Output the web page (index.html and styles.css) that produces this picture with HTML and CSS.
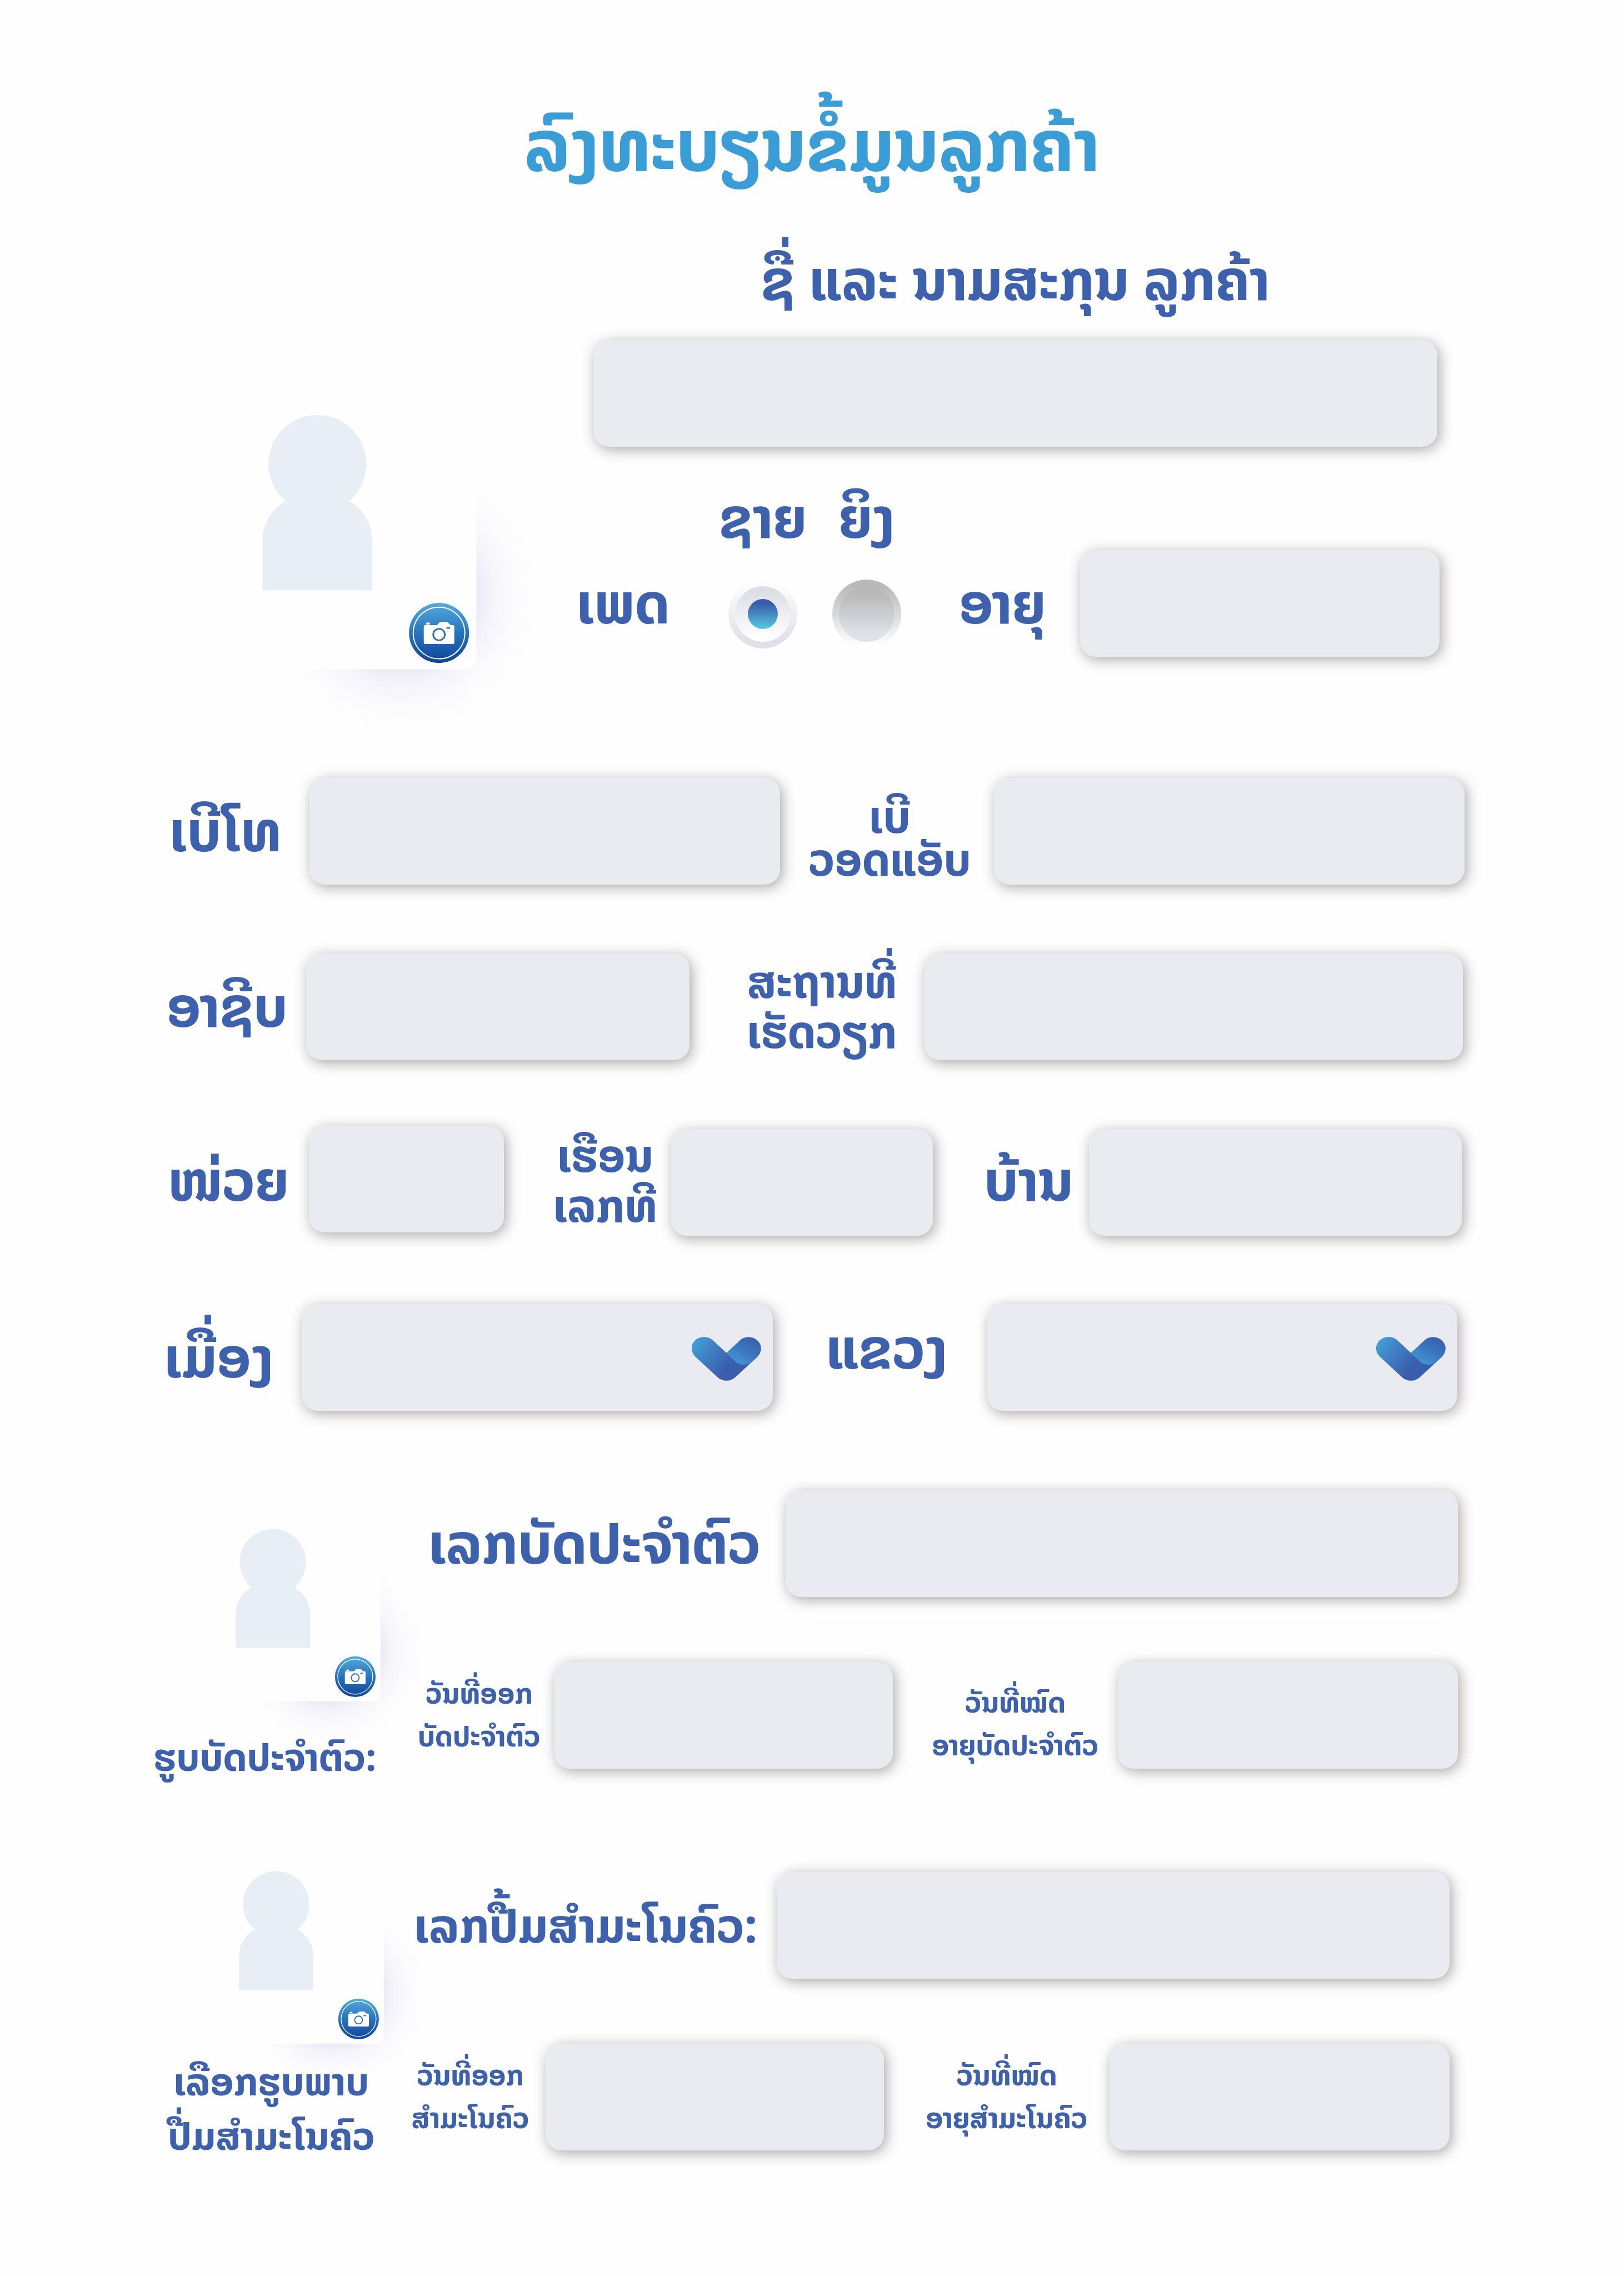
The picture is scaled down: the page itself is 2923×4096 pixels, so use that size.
FILE: index.html
```html
<!DOCTYPE html>
<html lang="lo">
<head>
<meta charset="utf-8">
<meta name="viewport" content="width=device-width, initial-scale=1">
<title>ລົງທະບຽນຂໍ້ມູນລູກຄ້າ</title>
<link rel="stylesheet" href="styles.css">
</head>
<body>
<svg class="defs" aria-hidden="true">
  <defs>
    <radialGradient id="glow">
      <stop offset="0" stop-color="#dedaf0"/>
      <stop offset=".54" stop-color="#ebe9f5"/>
      <stop offset=".66" stop-color="#f5f4fa"/>
      <stop offset=".82" stop-color="#fbfbfd"/>
      <stop offset="1" stop-color="#fefefe"/>
    </radialGradient>
    <linearGradient id="badge" x1="0" y1="0" x2="0" y2="1">
      <stop offset="0" stop-color="#53abdf"/>
      <stop offset=".5" stop-color="#2874bb"/>
      <stop offset="1" stop-color="#10439b"/>
    </linearGradient>
    <linearGradient id="arm-left" gradientUnits="userSpaceOnUse" x1="205" y1="205" x2="390" y2="350">
      <stop offset="0" stop-color="#439bd5"/>
      <stop offset=".55" stop-color="#3e78bf"/>
      <stop offset="1" stop-color="#3a5eab"/>
    </linearGradient>
    <linearGradient id="arm-right" gradientUnits="userSpaceOnUse" x1="460" y1="325" x2="540" y2="190">
      <stop offset="0" stop-color="#4493d0"/>
      <stop offset=".5" stop-color="#3c78bf"/>
      <stop offset="1" stop-color="#3b62ae"/>
    </linearGradient>
    <symbol id="photo-card" viewBox="490 780 540 520" overflow="visible">
      <circle cx="762" cy="1129" r="260" fill="url(#glow)"/>
      <path d="M490 780H904V1251a19 19 0 0 1-19 19H490Z" fill="#fefefe"/>
      <circle cx="602" cy="880" r="93" fill="#e7eef6"/>
      <path d="M498 1120V1024a83 83 0 0 1 83-83h42a83 83 0 0 1 83 83v96Z" fill="#e7eef6"/>
      <circle cx="833" cy="1201" r="57" fill="url(#badge)"/>
      <circle cx="833" cy="1201" r="49" fill="none" stroke="#fff" stroke-width="2"/>
      <path d="M808 1185v-1a3 3 0 0 1 3-3h2a3 3 0 0 1 3 3v1Z" fill="#fff"/>
      <path d="M807 1186h22l5-5q1-1 3-1h10q2 0 3 1l5 5h4q3 0 3 3v30q0 3-3 3h-52q-3 0-3-3v-30q0-3 3-3Z" fill="#fff"/>
      <circle cx="833" cy="1204" r="11" fill="none" stroke="#2b72ba" stroke-width="3"/>
      <rect x="847" y="1190" width="7" height="3" fill="#2874bb"/>
    </symbol>
    <symbol id="chevron" viewBox="189 171 396 248">
      <path fill="url(#arm-left)" d="M210 283C182 255 182 218 205 193C235 163 283 163 312 191L387 261L564 283L437 400C408 426 366 426 337 400Z"/>
      <path fill="url(#arm-right)" d="M387 261L462 191C491 163 540 165 566 193C592 218 590 257 564 283L522 321C497 331 460 330 437 309Z"/>
    </symbol>
  </defs>
</svg>

<form class="page">
  <h1 class="title">ລົງທະບຽນຂໍ້ມູນລູກຄ້າ</h1>

  <section class="profile">
    <label class="photo photo--large">
      <svg class="photo__art" role="img" aria-label="ຮູບພາບ"><use href="#photo-card"/></svg>
      <input class="photo__file" type="file" accept="image/*">
    </label>
    <div class="profile__fields">
      <div class="name">
        <label class="label" for="name">ຊື່ ແລະ ນາມສະກຸນ ລູກຄ້າ</label>
        <input class="field" id="name" type="text">
      </div>
      <div class="person">
        <span class="label label--tall" id="gender">ເພດ</span>
        <div class="options" role="radiogroup" aria-labelledby="gender">
          <label class="option"><span class="label">ຊາຍ</span><input class="radio" type="radio" name="gender" checked></label>
          <label class="option"><span class="label">ຍິງ</span><input class="radio" type="radio" name="gender"></label>
        </div>
        <label class="label label--tall" for="age">ອາຍຸ</label>
        <input class="field" id="age" type="text">
      </div>
    </div>
  </section>

  <div class="row row--phone">
    <label class="label" for="phone">ເບີໂທ</label>
    <input class="field" id="phone" type="text">
    <label class="label label--medium label--tight" for="whatsapp">ເບີ<br>ວອດແອັບ</label>
    <input class="field" id="whatsapp" type="text">
  </div>

  <div class="row row--job">
    <label class="label" for="job">ອາຊີບ</label>
    <input class="field" id="job" type="text">
    <label class="label label--medium label--second" for="workplace">ສະຖານທີ່<br>ເຮັດວຽກ</label>
    <input class="field" id="workplace" type="text">
  </div>

  <div class="row row--home">
    <label class="label" for="unit">ໜ່ວຍ</label>
    <input class="field" id="unit" type="text">
    <label class="label label--medium label--second" for="house">ເຮືອນ<br>ເລກທີ</label>
    <input class="field" id="house" type="text">
    <label class="label label--second" for="village">ບ້ານ</label>
    <input class="field" id="village" type="text">
  </div>

  <div class="row row--area">
    <label class="label" for="district">ເມື່ອງ</label>
    <div class="dropdown">
      <select class="field" id="district"><option></option></select>
      <svg class="dropdown__arrow" aria-hidden="true"><use href="#chevron"/></svg>
    </div>
    <label class="label label--second" for="province">ແຂວງ</label>
    <div class="dropdown">
      <select class="field" id="province"><option></option></select>
      <svg class="dropdown__arrow" aria-hidden="true"><use href="#chevron"/></svg>
    </div>
  </div>

  <section class="document document--card">
    <label class="photo">
      <svg class="photo__art" aria-hidden="true"><use href="#photo-card"/></svg>
      <span class="caption">ຮູບບັດປະຈຳຕົວ:</span>
      <input class="photo__file" type="file" accept="image/*">
    </label>
    <div class="document__fields">
      <div class="number">
        <label class="label" for="card-number">ເລກບັດປະຈຳຕົວ</label>
        <input class="field" id="card-number" type="text">
      </div>
      <div class="dates">
        <label class="label label--small" for="card-issued">ວັນທີ່ອອກ<br>ບັດປະຈຳຕົວ</label>
        <input class="field" id="card-issued" type="text">
        <label class="label label--small label--second" for="card-expires">ວັນທີ່ໝົດ<br>ອາຍຸບັດປະຈຳຕົວ</label>
        <input class="field" id="card-expires" type="text">
      </div>
    </div>
  </section>

  <section class="document document--family">
    <label class="photo">
      <svg class="photo__art" aria-hidden="true"><use href="#photo-card"/></svg>
      <span class="caption">ເລືອກຮູບພາບ<br>ປື່ມສຳມະໂນຄົວ</span>
      <input class="photo__file" type="file" accept="image/*">
    </label>
    <div class="document__fields">
      <div class="number">
        <label class="label label--medium" for="book-number">ເລກປື້ມສຳມະໂນຄົວ:</label>
        <input class="field" id="book-number" type="text">
      </div>
      <div class="dates">
        <label class="label label--small" for="book-issued">ວັນທີ່ອອກ<br>ສຳມະໂນຄົວ</label>
        <input class="field" id="book-issued" type="text">
        <label class="label label--small label--second" for="book-expires">ວັນທີ່ໝົດ<br>ອາຍຸສຳມະໂນຄົວ</label>
        <input class="field" id="book-expires" type="text">
      </div>
    </div>
  </section>
</form>
</body>
</html>
```
FILE: styles.css
```css
* { box-sizing: border-box; }

body {
  margin: 0;
  background: #fefefe;
  color: #3d61ac;
  font-family: "Noto Sans Lao", "DejaVu Sans Condensed", "DejaVu Sans", sans-serif;
  font-weight: 700;
}

.defs { position: absolute; width: 0; height: 0; }

.page { padding-bottom: 200px; }

.title {
  margin: 0;
  padding-top: 180px;
  color: #3a9dd5;
  font-size: 129px;
  line-height: 164px;
  text-align: center;
}

/* Shared controls */
.label {
  font-size: 101px;
  line-height: 120px;
  text-align: center;
  white-space: nowrap;
}
.label--tall { line-height: 192px; }
.label--medium { font-size: 81px; line-height: 90px; }
.label--tight { padding: 24px 0 0 10px; line-height: 77px; }
.label--small { font-size: 51px; line-height: 77px; }

.field {
  display: block;
  width: 100%;
  min-width: 0;
  height: 192px;
  padding: 0 40px;
  border: 0;
  border-radius: 28px;
  background: #eaebf1;
  box-shadow: 4px 5px 24px rgba(35, 24, 21, .38);
  color: inherit;
  font: inherit;
  font-size: 76px;
  appearance: none;
}

.radio {
  width: 124px;
  height: 124px;
  margin: 0;
  padding: 23px;
  border: 12px solid transparent;
  border-radius: 50%;
  appearance: none;
  background:
    linear-gradient(#b9b9b9 15%, #dfe1e8 85%) padding-box,
    linear-gradient(#b9b9b9 10%, #fefefe 95%) border-box;
}
.radio:checked {
  background:
    linear-gradient(#3a5caa 15%, #55cbe1) content-box,
    linear-gradient(#dddfe6 10%, #fefefe 90%) padding-box,
    linear-gradient(#fefefe 5%, #dfe0e8 90%) border-box;
}

.photo { display: block; position: relative; }
.photo__art { display: block; width: 347px; height: 334px; overflow: visible; }
.photo--large .photo__art { width: 512px; height: 493px; }
.photo__file { position: absolute; width: 1px; height: 1px; opacity: 0; }
.caption { display: block; position: relative; font-size: 69px; line-height: 98px; white-space: nowrap; }

.dropdown { position: relative; }
.dropdown__arrow {
  position: absolute;
  top: 59px;
  right: 21px;
  width: 125px;
  height: 79px;
  pointer-events: none;
}

/* Customer profile */
.profile {
  display: grid;
  grid-template-columns: 465fr 559fr 1567fr 332fr;
  padding-top: 100px;
}
.profile .photo { grid-column: 2; padding-top: 296px; }
.profile__fields { grid-column: 3; }
.name { display: grid; gap: 48px; padding: 0 4px 0 44px; }
.person {
  display: grid;
  grid-template-columns: 196fr 445fr 279fr 647fr;
  align-items: end;
  padding-top: 83px;
}
.options { display: grid; grid-template-columns: 187fr 187fr; padding: 0 12px 15px 60px; }
.option { display: grid; justify-items: center; gap: 66px; }
.option .label { line-height: 90px; }

/* Form rows */
.row { display: grid; align-items: center; }
.row--phone { grid-template-columns: 255fr 302fr 847fr 385fr 847fr 287fr; padding-top: 167px; }
.row--job { grid-template-columns: 255fr 296fr 690fr 423fr 969fr 290fr; padding-top: 124px; }
.row--home { grid-template-columns: 255fr 301fr 351fr 301fr 471fr 281fr 671fr 292fr; min-height: 316px; padding-top: 118px; }
.row--area { grid-template-columns: 245fr 298fr 848fr 386fr 846fr 300fr; padding-top: 123px; }
.row > :first-child { grid-column: 2; }
.row--job > :first-child, .row--home > :first-child { padding-left: 12px; }
.row--home .field { align-self: end; }
.row--home #unit { align-self: start; }
.row--job .label--second { padding-left: 54px; }
.row--home .label--second { padding-left: 64px; }
.row--area .label--second { padding: 0 0 32px 24px; }

/* Identity documents */
.document { display: grid; }
.document .photo { display: grid; grid-template-columns: 100%; justify-items: center; align-content: start; text-align: center; }
.document .photo__art { justify-self: start; margin-left: 142px; }
.document__fields { display: grid; gap: 117px; align-content: start; }
.document .caption { grid-row: 2; }
.number, .dates { display: grid; align-items: center; }
.document--card { grid-template-columns: 277fr minmax(0, 400fr) 50fr 1897fr 299fr; padding-top: 143px; }
.document--card .photo { grid-column: 2; padding-top: 65px; gap: 32px; }
.document--card .document__fields { grid-column: 4; }
.document--family { grid-template-columns: 283fr minmax(0, 411fr) 17fr 1898fr 314fr; padding-top: 152px; }
.document--family .photo { grid-column: 2; }
.document--family .document__fields { grid-column: 4; padding-top: 6px; }
.document--family .label--medium { font-size: 85px; }
.number { grid-template-columns: 687fr 1211fr; }
.dates { grid-template-columns: 271fr 609fr 406fr 612fr; }
.dates .label--second { padding-left: 36px; }
.document--card .label--second { padding-top: 32px; }
```
